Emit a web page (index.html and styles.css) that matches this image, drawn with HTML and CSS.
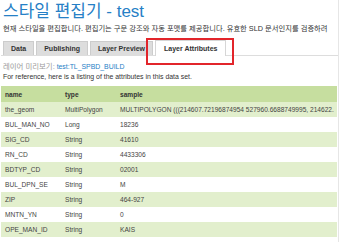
FILE: index.html
```html
<!DOCTYPE html>
<html lang="ko">
<head>
    <meta charset="UTF-8">
    <meta name="viewport" content="width=device-width, initial-scale=1.0">
    <title>스타일 편집기 - test</title>
    <link rel="stylesheet" href="styles.css">
</head>
<body>
    <div class="page">
        <h1 class="title">스타일 편집기 - test</h1>
        <p class="intro">현재 스타일을 편집합니다. 편집기는 구문 강조와 자동 포맷를 제공합니다. 유효한 SLD 문서인지를 검증하려</p>

        <ul class="tabs">
            <li class="tab">Data</li>
            <li class="tab">Publishing</li>
            <li class="tab">Layer Preview</li>
            <li class="tab tab-active">Layer Attributes</li>
        </ul>

        <p class="layer-line"><span class="muted">레이어 미리보기:</span> <a href="#" class="layer-link">test:TL_SPBD_BUILD</a></p>
        <p class="ref-line">For reference, here is a listing of the attributes in this data set.</p>

        <table class="attrs">
            <colgroup>
                <col class="col-name">
                <col class="col-type">
                <col>
            </colgroup>
            <thead>
                <tr>
                    <th>name</th>
                    <th>type</th>
                    <th>sample</th>
                </tr>
            </thead>
            <tbody>
                <tr><td>the_geom</td><td>MultiPolygon</td><td>MULTIPOLYGON (((214607.72196874954 527960.6688749995, 214622.</td></tr>
                <tr><td>BUL_MAN_NO</td><td>Long</td><td>18236</td></tr>
                <tr><td>SIG_CD</td><td>String</td><td>41610</td></tr>
                <tr><td>RN_CD</td><td>String</td><td>4433306</td></tr>
                <tr><td>BDTYP_CD</td><td>String</td><td>02001</td></tr>
                <tr><td>BUL_DPN_SE</td><td>String</td><td>M</td></tr>
                <tr><td>ZIP</td><td>String</td><td>464-927</td></tr>
                <tr><td>MNTN_YN</td><td>String</td><td>0</td></tr>
                <tr><td>OPE_MAN_ID</td><td>String</td><td>KAIS</td></tr>
            </tbody>
        </table>
    </div>
</body>
</html>
```

FILE: styles.css
```css
body {
    margin: 0;
    padding: 0;
    font-family: 'Liberation Sans', 'Noto Sans CJK KR', sans-serif;
    color: #333;
    background: #fff;
    overflow: hidden;
}

.page {
    width: 337px;
    height: 242px;
    padding-left: 1px;
    border-right: 1px solid #e6e6e6;
    overflow: hidden;
}

.title {
    margin: 0;
    padding: 2px 0 0 2px;
    font-size: 17px;
    line-height: 20px;
    font-weight: normal;
    color: #2680c6;
    white-space: nowrap;
}

.intro {
    margin: 0;
    padding: 2px 0 0 2px;
    font-size: 7.3px;
    line-height: 9px;
    color: #333;
    white-space: nowrap;
    overflow: hidden;
}

.tabs {
    list-style: none;
    margin: 0;
    padding: 7px 0 0 2px;
    display: flex;
    align-items: flex-end;
    gap: 2px;
    border-bottom: 1px solid #ddd;
}

.tab {
    padding: 0 7px;
    height: 13px;
    line-height: 13px;
    font-size: 7px;
    font-weight: bold;
    color: #333;
    background: #ddd;
    border: 1px solid #ccc;
    border-bottom: none;
    white-space: nowrap;
}

.tab-active {
    position: relative;
    height: 15px;
    line-height: 16px;
    padding: 0 8px;
    background: #fff;
    margin-bottom: -1px;
    border-color: #d6d6d6;
}

/* highlight box drawn round the active tab */
.tab-active::after {
    content: '';
    position: absolute;
    left: -10px;
    right: -9px;
    top: -3px;
    bottom: -9px;
    border: 2px solid #e2252b;
}

.layer-line,
.ref-line {
    margin: 0;
    padding-left: 2px;
    font-size: 6.9px;
    line-height: 10px;
    white-space: nowrap;
}

.layer-line {
    margin-top: 6px;
}

.muted {
    color: #999;
    font-size: 7.4px;
}

.layer-link {
    color: #2680c6;
    text-decoration: none;
}

.attrs {
    margin-top: 4px;
    width: 336px;
    border-collapse: collapse;
    table-layout: fixed;
    font-size: 6.6px;
}

.col-name {
    width: 60px;
}

.col-type {
    width: 55px;
}

.attrs th,
.attrs td {
    padding: 0 0 0 4px;
    text-align: left;
    white-space: nowrap;
    overflow: hidden;
}

.attrs th {
    height: 16px;
    background: #c6de9f;
    font-weight: bold;
    color: #333;
}

.attrs td {
    height: 15px;
    color: #444;
}

.attrs tbody tr:nth-child(odd) td {
    background: #e2efcd;
}
```
